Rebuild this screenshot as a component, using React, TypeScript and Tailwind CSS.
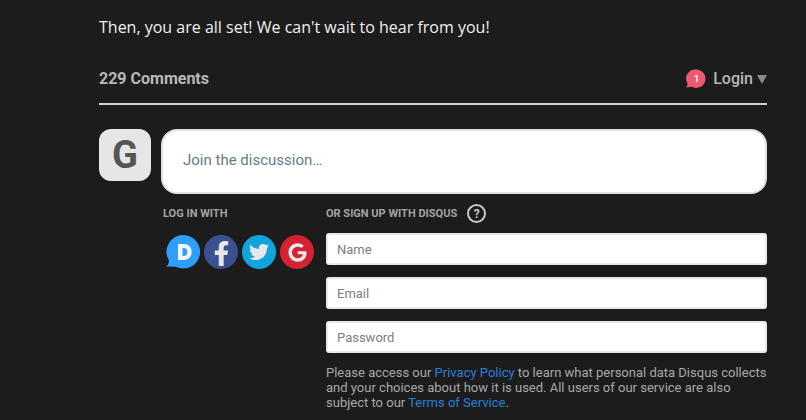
import { FaFacebookF, FaGoogle, FaTwitter } from "react-icons/fa";

function DisqusIcon() {
  return (
    <svg width="34" height="34" viewBox="0 0 34 34" className="shrink-0">
      <path d="M17.300 0a16.800 16.800 0 1 1-7.600 31.800L0 31.500c1.800-1 3-3 3-6A16.800 16.800 0 0 1 17.300 0z" fill="#2e9fff" />
      <path
        d="M12 9h5.600c5 0 8.100 3.200 8.100 7.900s-3.100 8.100-8.100 8.100H12zm4.500 4v8h1.200c2.300 0 3.600-1.500 3.600-4s-1.300-4-3.600-4z"
        fill="#f0f4f8"
        fillRule="evenodd"
      />
    </svg>
  );
}

function NotifyBadge() {
  return (
    <svg width="20" height="20" viewBox="0 0 20 20" className="shrink-0">
      <path d="M10.300 0.500a9.200 9.200 0 1 1-4.400 17.300L0 18.500c1-1 1.600-2.300 1.500-4A9.200 9.200 0 0 1 10.300 0.500z" fill="#f0596f" />
      <text x="10.500" y="13" textAnchor="middle" fontSize="9" fontWeight="700" fill="#fff" fontFamily="Roboto, sans-serif">
        1
      </text>
    </svg>
  );
}

function Field({ label }: { label: string }) {
  return (
    <div className="flex h-8 items-center rounded-[3px] border-2 border-[#e7e9ee] bg-white px-[9px] pt-[2px] text-[13px] text-[#7d7d7d]">
      {label}
    </div>
  );
}

export default function App() {
  return (
    <div className="h-[420px] w-[806px] overflow-hidden bg-[#1c1c1c] font-['Roboto',sans-serif]">
      <div className="ml-[99px] w-[668px]">
        <p className="pt-[15px] font-['Open_Sans',sans-serif] text-base leading-6 text-[#f0f0f0]">
          Then, you are all set! We can't wait to hear from you!
        </p>

        {/* Header */}
        <div className="mt-[24px] flex h-[42px] items-start justify-between border-b-2 border-[#ccd0d4] pt-[5px]">
          <span className="text-base leading-[22px] font-bold text-[#b8b8b8]">229 Comments</span>
          <div className="flex items-center">
            <NotifyBadge />
            <span className="ml-[7px] text-base leading-[22px] font-medium text-[#b8b8b8]">Login</span>
            <span className="ml-[4px] h-0 w-0 border-x-[5px] border-t-[9px] border-x-transparent border-t-[#8a8a8a]" />
          </div>
        </div>

        {/* Reply box */}
        <div className="mt-[24px] flex gap-[10px]">
          <div className="flex h-[52px] w-[52px] shrink-0 items-center justify-center rounded-xl bg-[#e6e6e6] text-[38px] font-bold text-[#555]">
            G
          </div>
          <div className="flex h-[65px] flex-1 items-center rounded-2xl border-2 border-[#dde1e5] bg-white px-[20px] pb-[2px] text-[15px] text-[#687a86]">
            Join the discussion…
          </div>
        </div>

        <div className="mt-[13px] flex pl-[64px]">
          <div className="w-[163px] shrink-0">
            <h3 className="text-[11px] leading-[13px] font-bold text-[#a3a3a3]">LOG IN WITH</h3>
            <div className="mt-[15px] flex gap-[4px] pl-[3px]">
              <DisqusIcon />
              <span className="flex h-[34px] w-[34px] items-center justify-center rounded-full bg-[#3b5090] pt-[3px] text-[25px] text-[#e8e8e8]">
                <FaFacebookF />
              </span>
              <span className="flex h-[34px] w-[34px] items-center justify-center rounded-full bg-[#11a3dc] text-[20px] text-[#e8e8e8]">
                <FaTwitter />
              </span>
              <span className="flex h-[34px] w-[34px] items-center justify-center rounded-full bg-[#d32230] text-[19px] text-[#e8e8e8]">
                <FaGoogle />
              </span>
            </div>
          </div>

          <div className="flex-1">
            <div className="flex h-[13px] items-center gap-[10px]">
              <h3 className="text-[11px] leading-[13px] font-bold text-[#a3a3a3]">OR SIGN UP WITH DISQUS</h3>
              <span className="flex h-[19px] w-[19px] items-center justify-center rounded-full border-2 border-[#c8c8c8] text-xs font-bold text-[#c8c8c8]">
                ?
              </span>
            </div>
            <div className="mt-[13px] flex flex-col gap-3">
              <Field label="Name" />
              <Field label="Email" />
              <Field label="Password" />
            </div>
            <p className="mt-[12px] text-[13px] leading-[15px] text-[#a8a8a8]">
              Please access our <a className="text-[#2a7fd8]">Privacy Policy</a> to learn what personal data Disqus collects and your choices about how it is used. All users of our service are also subject to our <a className="text-[#2a7fd8]">Terms of Service</a>.
            </p>
          </div>
        </div>
      </div>
    </div>
  );
}
